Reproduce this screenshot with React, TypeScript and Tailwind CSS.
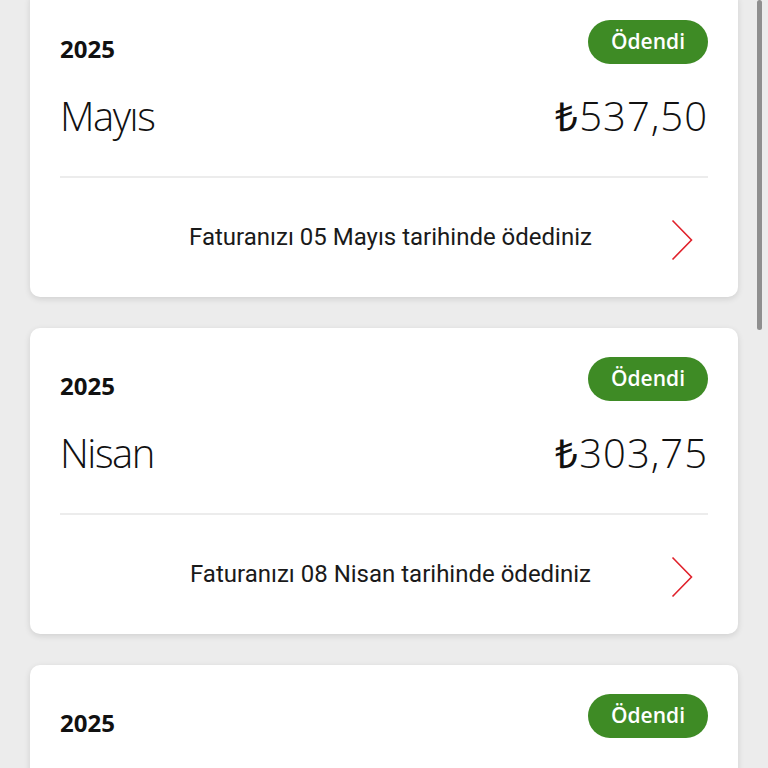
import React from 'react';

interface Bill {
  year: string;
  month: string;
  amount: string;
  paidOn: string;
}

const bills: Bill[] = [
  { year: '2025', month: 'Mayıs', amount: '537,50', paidOn: '05 Mayıs' },
  { year: '2025', month: 'Nisan', amount: '303,75', paidOn: '08 Nisan' },
  { year: '2025', month: 'Mart', amount: '412,20', paidOn: '06 Mart' },
];

function Chevron() {
  return (
    <svg width="22" height="42" viewBox="0 0 22 42" fill="none" className="shrink-0 mt-[6px]">
      <path d="M1.5 1.5 L20.5 21 L1.5 40.5" stroke="#e0212b" strokeWidth="1.6" strokeLinejoin="miter" />
    </svg>
  );
}

function BillCard({ bill }: { bill: Bill }) {
  return (
    <div className="bg-white rounded-[10px] shadow-[0_2px_6px_rgba(0,0,0,0.12)] h-[306px] shrink-0">
      <div className="px-[30px] pt-[29px]">
        <div className="flex justify-between items-start">
          <span className="mt-[17px] text-[24px] leading-[24px] font-bold text-[#111] font-['Open_Sans',sans-serif]">
            {bill.year}
          </span>
          <span className="h-[44px] px-[23px] flex items-center rounded-full bg-[#3e8b25] text-white text-[21px] font-semibold font-['Open_Sans',sans-serif]">
            Ödendi
          </span>
        </div>
        <div className="mt-[32px] flex justify-between items-baseline text-[40px] leading-[40px] font-light text-[#111] font-['Open_Sans',sans-serif]">
          <span className="tracking-[-1.5px]">{bill.month}</span>
          <span className="tracking-[1px]">₺{bill.amount}</span>
        </div>
        <div className="mt-[40px] h-[2px] bg-[#ececec]" />
      </div>
      <div className="h-[118px] flex items-center pl-[80px] pr-[45px]">
        <span className="flex-1 text-center text-[24px] text-[#1a1a1a] font-['Roboto',sans-serif]">
          Faturanızı {bill.paidOn} tarihinde ödediniz
        </span>
        <Chevron />
      </div>
    </div>
  );
}

export default function App() {
  return (
    <div className="relative h-[768px] overflow-hidden bg-[#ececec]">
      <div className="flex flex-col gap-[31px] px-[30px] -mt-[9px]">
        {bills.map(bill => (
          <BillCard key={bill.month} bill={bill} />
        ))}
      </div>
      <div className="absolute top-0 right-[6px] w-[5px] h-[330px] rounded-full bg-[#8f8f8f]" />
    </div>
  );
}
